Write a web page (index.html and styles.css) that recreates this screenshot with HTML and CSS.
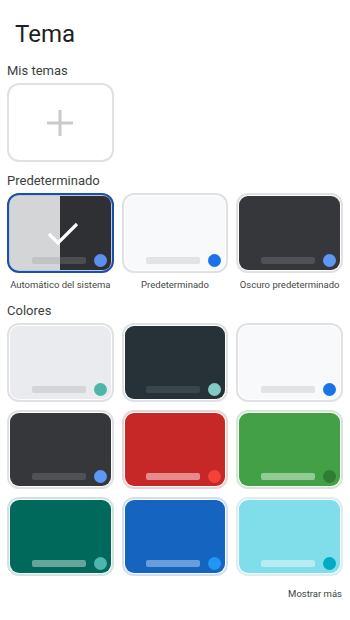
FILE: index.html
```html
<!DOCTYPE html>
<html lang="es">
<head>
<meta charset="utf-8">
<title>Tema</title>
<link rel="stylesheet" href="styles.css">
</head>
<body>
<div class="page">
  <h1 class="title">Tema</h1>

  <div class="section-label">Mis temas</div>
  <div class="grid">
    <div class="card add-card">
      <svg class="plus" width="28" height="28" viewBox="0 0 28 28" aria-hidden="true">
        <path d="M14 1V27M1 14H27" stroke="#c9cacb" stroke-width="3" fill="none"/>
      </svg>
    </div>
  </div>

  <div class="section-label label-default">Predeterminado</div>
  <div class="grid">
    <div class="item">
      <div class="card selected">
        <div class="face face-auto">
          <svg class="check" width="34" height="26" viewBox="0 0 34 26" aria-hidden="true">
            <path d="M3 13L12 22L31 3" stroke="#ffffff" stroke-width="3.2" fill="none"/>
          </svg>
          <div class="foot"><span class="bar bar-auto"></span><span class="dot dot-blue2"></span></div>
        </div>
      </div>
      <div class="caption">Automático del sistema</div>
    </div>
    <div class="item">
      <div class="card">
        <div class="face t-light">
          <div class="foot"><span class="bar"></span><span class="dot"></span></div>
        </div>
      </div>
      <div class="caption">Predeterminado</div>
    </div>
    <div class="item">
      <div class="card">
        <div class="face t-dark">
          <div class="foot"><span class="bar"></span><span class="dot"></span></div>
        </div>
      </div>
      <div class="caption">Oscuro predeterminado</div>
    </div>
  </div>

  <div class="section-label label-colors">Colores</div>
  <div class="grid colors">
    <div class="card"><div class="face t-grey"><div class="foot"><span class="bar"></span><span class="dot"></span></div></div></div>
    <div class="card"><div class="face t-slate"><div class="foot"><span class="bar"></span><span class="dot"></span></div></div></div>
    <div class="card"><div class="face t-light"><div class="foot"><span class="bar"></span><span class="dot"></span></div></div></div>
    <div class="card"><div class="face t-dark"><div class="foot"><span class="bar"></span><span class="dot"></span></div></div></div>
    <div class="card b-red"><div class="face t-red"><div class="foot"><span class="bar"></span><span class="dot"></span></div></div></div>
    <div class="card b-green"><div class="face t-green"><div class="foot"><span class="bar"></span><span class="dot"></span></div></div></div>
    <div class="card b-teal"><div class="face t-teal"><div class="foot"><span class="bar"></span><span class="dot"></span></div></div></div>
    <div class="card b-blue"><div class="face t-blue"><div class="foot"><span class="bar"></span><span class="dot"></span></div></div></div>
    <div class="card b-cyan"><div class="face t-cyan"><div class="foot"><span class="bar"></span><span class="dot"></span></div></div></div>
  </div>

  <div class="more-row"><span class="more">Mostrar más</span></div>
</div>
</body>
</html>
```

FILE: styles.css
```css
* { box-sizing: border-box; }

html, body {
  margin: 0;
  padding: 0;
  background: #ffffff;
}

body {
  font-family: Roboto, "Noto Sans", "Liberation Sans", sans-serif;
  color: #1f1f1f;
}

.page {
  padding: 0 7px;
}

.title {
  margin: 20px 0 0 8px;
  font-size: 24px;
  line-height: 28px;
  font-weight: 400;
  color: #1f1f1f;
}

.section-label {
  margin-top: 15px;
  font-size: 13px;
  line-height: 16px;
  color: #3c3f41;
}

.label-default { margin-top: 11px; }
.label-colors { margin-top: 12px; }

.grid {
  margin-top: 4px;
  display: grid;
  grid-template-columns: repeat(3, 1fr);
  column-gap: 8px;
  row-gap: 8px;
}

.item {
  display: flex;
  flex-direction: column;
}

.card {
  height: 80px;
  border: 2px solid #e0e1e2;
  border-radius: 12px;
  padding: 1px;
  background: #ffffff;
}

.colors .card { height: 79px; }

.add-card {
  height: 79px;
  display: flex;
  align-items: center;
  justify-content: center;
}

.face {
  position: relative;
  height: 100%;
  border-radius: 9px;
  display: flex;
  flex-direction: column;
  justify-content: flex-end;
  overflow: hidden;
}

.foot {
  display: flex;
  align-items: center;
  justify-content: flex-end;
  gap: 8px;
  padding: 0 4px 3px 0;
}

.bar {
  width: 54px;
  height: 7px;
  border-radius: 2px;
  background: #e1e3e6;
}

.dot {
  width: 13px;
  height: 13px;
  border-radius: 50%;
  background: #1a73e8;
}

/* selected auto card */
.selected {
  border: 2px solid #1d4fa6;
  padding: 1px;
  background: #b9c9ea;
}

.face-auto {
  background: linear-gradient(to right, #d4d5d7 0, #d4d5d7 50%, #2e3034 50%, #2e3034 100%);
  border-radius: 8px;
}

.bar-auto {
  background: linear-gradient(to right, #c2c3c5 0, #c2c3c5 52%, #4b4d51 52%, #4b4d51 100%);
}

.dot-blue2 { background: #5b8ff0; }

.check {
  position: absolute;
  left: 36px;
  top: 25px;
}

.caption {
  margin-top: 5px;
  font-size: 9.5px;
  line-height: 13px;
  text-align: center;
  color: #444746;
  white-space: nowrap;
}

/* themes */
.t-light { background: #f8f9fa; }
.t-light .bar { background: #e1e3e5; }
.t-light .dot { background: #1a73e8; }

.t-dark { background: #35373b; }
.t-dark .bar { background: #4e5155; }
.t-dark .dot { background: #5e97f6; }

.t-grey { background: #e9ebee; }
.t-grey .bar { background: #d3d5d8; }
.t-grey .dot { background: #4db6ac; }

.t-slate { background: #263238; }
.t-slate .bar { background: #3a464c; }
.t-slate .dot { background: #80cbc4; }

.t-red { background: #c62828; }
.t-red .bar { background: #e48c8c; }
.t-red .dot { background: #f44336; }

.t-green { background: #43a047; }
.t-green .bar { background: #92cc94; }
.t-green .dot { background: #2e7d32; }

.t-teal { background: #00695c; }
.t-teal .bar { background: #66a49c; }
.t-teal .dot { background: #4db6ac; }

.t-blue { background: #1565c0; }
.t-blue .bar { background: #6b9ddb; }
.t-blue .dot { background: #2196f3; }

.t-cyan { background: #80deea; }
.t-cyan .bar { background: #b7ecf3; }
.t-cyan .dot { background: #00acc1; }

.b-red { border-color: #ecd3d3; }
.b-green { border-color: #d3e7d4; }
.b-teal { border-color: #cfe3e0; }
.b-blue { border-color: #d1dff0; }
.b-cyan { border-color: #dbeef1; }

.more-row {
  margin-top: 11px;
  display: flex;
  justify-content: flex-end;
  padding-right: 1px;
}

.more {
  font-size: 9.5px;
  line-height: 13px;
  color: #3c3f41;
}
```
